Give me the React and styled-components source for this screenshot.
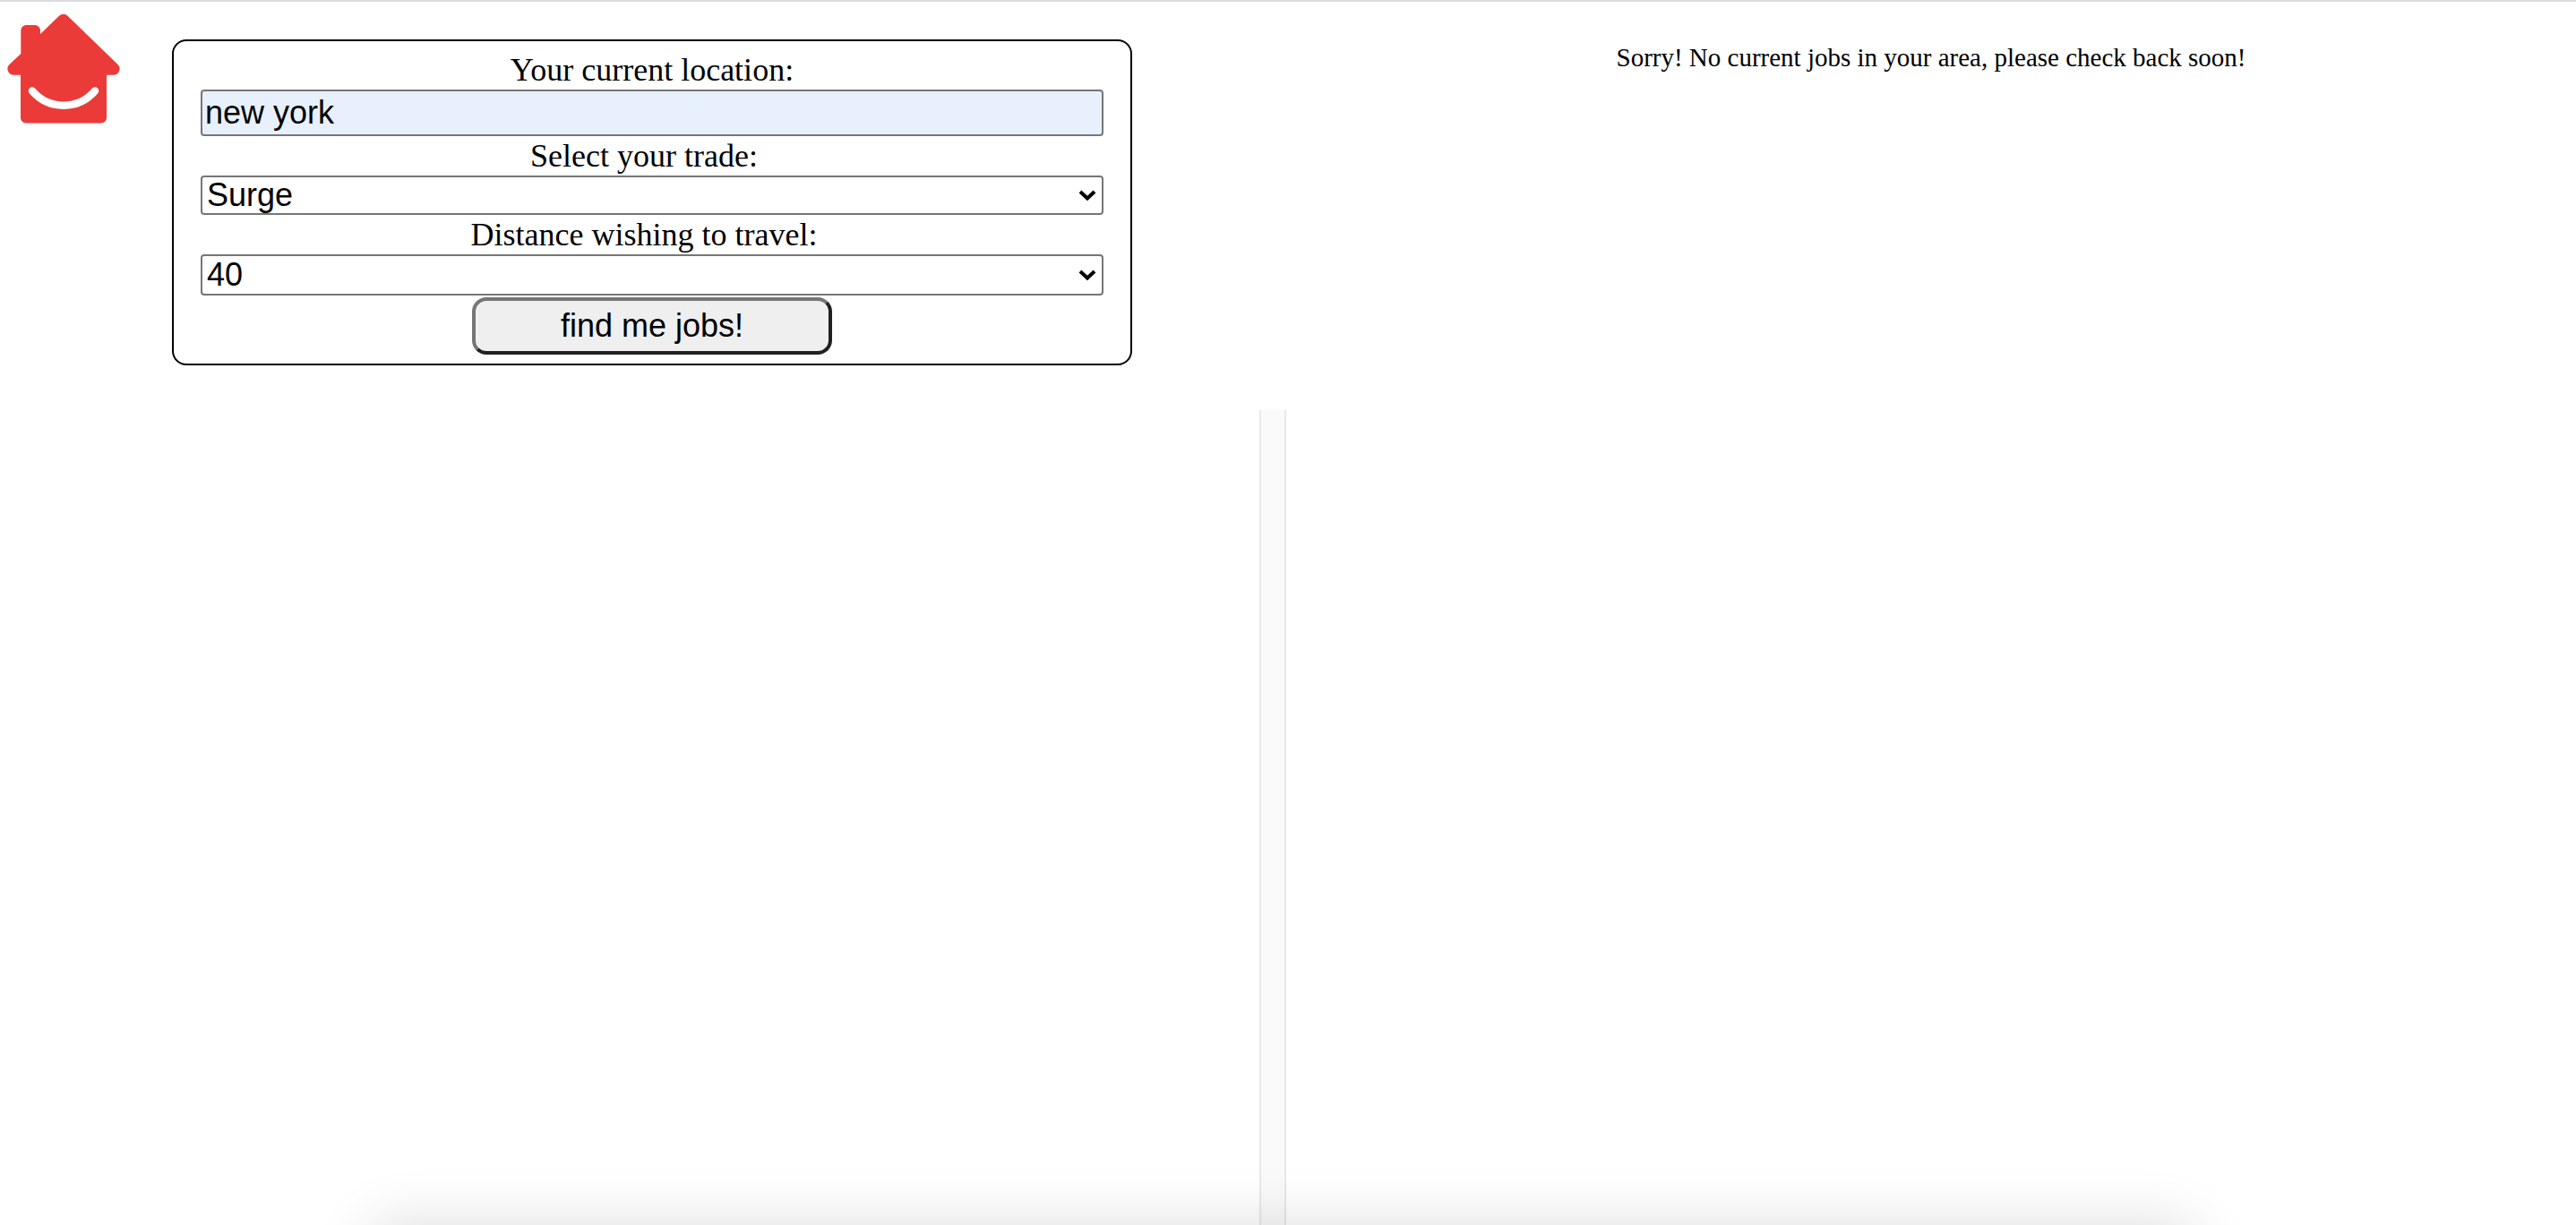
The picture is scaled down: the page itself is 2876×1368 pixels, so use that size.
import React, { useState } from "react";
import styled, { createGlobalStyle } from "styled-components";

const GlobalStyle = createGlobalStyle`
  *, *::before, *::after { box-sizing: border-box; }
  body {
    margin: 0;
    background: #ffffff;
    color: #000000;
    font-family: "Liberation Serif", "Times New Roman", serif;
  }
`;

const Page = styled.div`
  display: grid;
  grid-template-columns: calc(50% - 2px) 1fr;
  min-height: 100vh;
  border-top: 2px solid #dcdbe1;
`;

const SearchPane = styled.section`
  display: flex;
  flex-direction: column;
`;

const SearchHeader = styled.header`
  display: flex;
  align-items: flex-start;
  height: 456px;
`;

const HomeLink = styled.a`
  flex: none;
  width: 192px;
  padding: 10px 0 0 4px;
`;

const Logo = styled.svg`
  display: block;
  width: 132px;
  height: 132px;
`;

const SearchForm = styled.form`
  flex: 1;
  display: flex;
  flex-direction: column;
  margin: 42px 172px 0 0;
  padding: 10px 30px;
  border: 2px solid #000000;
  border-radius: 16px;
`;

const Label = styled.label`
  padding-right: ${({ $trailing }) => ($trailing ? "18px" : "0")};
  font-size: 36px;
  line-height: 44px;
  text-align: center;
`;

const control = `
  width: 100%;
  margin: 0;
  border: 2px solid #767676;
  border-radius: 4px;
  color: #000000;
  font-family: "Liberation Sans", Arial, sans-serif;
  font-size: 36px;
`;

const TextInput = styled.input`
  ${control}
  height: 52px;
  padding: 2px 3px;
  background: #e8f0fe;
`;

const SelectBox = styled.div`
  display: grid;
  align-items: center;
`;

const Select = styled.select`
  ${control}
  grid-area: 1 / 1;
  appearance: none;
  height: ${({ $tall }) => ($tall ? "46px" : "44px")};
  padding: 0 40px 0 5px;
  line-height: 40px;
  background: #ffffff;
`;

const Chevron = styled.svg`
  grid-area: 1 / 1;
  justify-self: end;
  width: 20px;
  height: 14px;
  margin-right: 8px;
  pointer-events: none;
`;

const SubmitButton = styled.button`
  align-self: center;
  width: 402px;
  height: 64px;
  margin-top: 2px;
  padding: 0;
  border: 4px solid;
  border-color: #767676 #212121 #212121 #767676;
  border-radius: 16px;
  background: #efefef;
  color: #000000;
  font-family: "Liberation Sans", Arial, sans-serif;
  font-size: 36px;
`;

const Results = styled.div`
  flex: 1;
  display: flex;
  justify-content: flex-end;
`;

const ScrollTrack = styled.div`
  width: 30px;
  border: solid #e8e8e8;
  border-width: 0 2px;
  background: #fafafa;
`;

const JobsPane = styled.main`
  padding-top: 42px;
  text-align: center;
`;

const Message = styled.p`
  margin: 0;
  font-size: 29px;
  line-height: 40px;
`;

const BottomShade = styled.div`
  position: fixed;
  top: 100%;
  left: 414px;
  right: 426px;
  height: 200px;
  border-radius: 20px;
  box-shadow: 0 0 68px rgba(0, 0, 0, 0.14);
  pointer-events: none;
`;

function HouseLogo() {
  return (
    <Logo viewBox="4 12 132 132" aria-hidden="true">
      <path
        fill="#eb3b38"
        d="M66 17.700A6.500 6.500 0 0 1 75.500 17.700L131.500 72A6.800 6.800 0 0 1 127 83.700H119V131.500A6 6 0 0 1 113 137.500H29A6 6 0 0 1 23 131.500V83.700H15A6.800 6.800 0 0 1 10.500 72L23.300 60V34A6 6 0 0 1 29.300 28H39A6 6 0 0 1 45 34V38Z"
      />
      <path
        d="M36 101.500A46 46 0 0 0 106 101.500"
        fill="none"
        stroke="#ffffff"
        strokeWidth="8.500"
        strokeLinecap="round"
      />
    </Logo>
  );
}

function Dropdown({ id, options, value, onChange, tall }) {
  return (
    <SelectBox>
      <Select id={id} $tall={tall} value={value} onChange={(e) => onChange(e.target.value)}>
        {options.map((option) => (
          <option key={option}>{option}</option>
        ))}
      </Select>
      <Chevron viewBox="0 0 20 14" aria-hidden="true">
        <path d="M2 3L10 10.500L18 3" fill="none" stroke="#000000" strokeWidth="4" />
      </Chevron>
    </SelectBox>
  );
}

export default function App() {
  const [location, setLocation] = useState("new york");
  const [trade, setTrade] = useState("Surge");
  const [distance, setDistance] = useState("40");

  return (
    <>
      <GlobalStyle />
      <Page>
        <SearchPane>
          <SearchHeader>
            <HomeLink href="#" aria-label="Home">
              <HouseLogo />
            </HomeLink>
            <SearchForm onSubmit={(e) => e.preventDefault()}>
              <Label htmlFor="location">Your current location:</Label>
              <TextInput
                id="location"
                value={location}
                onChange={(e) => setLocation(e.target.value)}
              />
              <Label htmlFor="trade" $trailing>Select your trade:</Label>
              <Dropdown id="trade" options={["Surge"]} value={trade} onChange={setTrade} />
              <Label htmlFor="distance" $trailing>Distance wishing to travel:</Label>
              <Dropdown id="distance" options={["40"]} value={distance} onChange={setDistance} tall />
              <SubmitButton type="submit">find me jobs!</SubmitButton>
            </SearchForm>
          </SearchHeader>
          <Results>
            <ScrollTrack />
          </Results>
        </SearchPane>
        <JobsPane>
          <Message>Sorry! No current jobs in your area, please check back soon!</Message>
        </JobsPane>
      </Page>
      <BottomShade />
    </>
  );
}
